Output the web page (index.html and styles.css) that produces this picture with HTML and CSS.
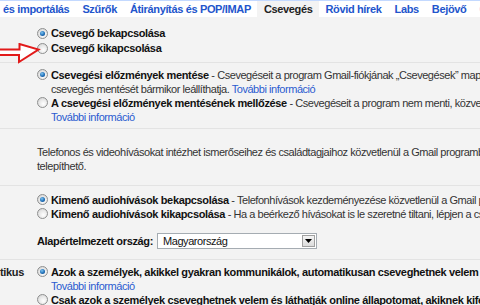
FILE: index.html
```html
<!DOCTYPE html>
<html lang="hu">
<head>
<meta charset="utf-8">
<title>Csevegés beállítások</title>
<link rel="stylesheet" href="styles.css">
</head>
<body>
<div class="page">
  <nav class="tabs">
    <a class="tab">és importálás</a>
    <a class="tab">Szűrők</a>
    <a class="tab">Átirányítás és POP/IMAP</a>
    <span class="tab active">Csevegés</span>
    <a class="tab">Rövid hírek</a>
    <a class="tab">Labs</a>
    <a class="tab">Bejövő</a>
    <a class="tab">Címkék</a>
  </nav>

  <div class="content">
    <section class="row s1">
      <div class="label"></div>
      <div class="body">
        <div class="opt tall"><span class="radio on"></span><div class="txt"><b>Csevegő bekapcsolása</b></div></div>
        <div class="opt tall"><span class="radio"></span><div class="txt"><b>Csevegő kikapcsolása</b></div></div>
      </div>
    </section>

    <section class="row s2">
      <div class="label"></div>
      <div class="body">
        <div class="opt"><span class="radio on"></span><div class="txt"><b>Csevegési előzmények mentése</b> - Csevegéseit a program Gmail-fiókjának „Csevegések” mappájában tárolja.<br>csevegés mentését bármikor leállíthatja. <a class="link">További információ</a></div></div>
        <div class="opt"><span class="radio"></span><div class="txt"><b>A csevegési előzmények mentésének mellőzése</b> - Csevegéseit a program nem menti, közvetlenül<br><a class="link">További információ</a></div></div>
      </div>
    </section>

    <section class="row s3">
      <div class="label"></div>
      <div class="body">
        <p class="para">Telefonos és videohívásokat intézhet ismerőseihez és családtagjaihoz közvetlenül a Gmail programból, a bővítmény<br>telepíthető.</p>
      </div>
    </section>

    <section class="row s4">
      <div class="label"></div>
      <div class="body">
        <div class="opt"><span class="radio on"></span><div class="txt"><b>Kimenő audiohívások bekapcsolása</b> - Telefonhívások kezdeményezése közvetlenül a Gmail programból</div></div>
        <div class="opt"><span class="radio"></span><div class="txt"><b>Kimenő audiohívások kikapcsolása</b> - Ha a beérkező hívásokat is le szeretné tiltani, lépjen a csevegő</div></div>
        <div class="country">
          <b>Alapértelmezett ország:</b>
          <span class="select"><span class="sel-text">Magyarország</span><span class="sel-btn"><svg width="7" height="4" viewBox="0 0 7 4"><path d="M0 0h7L3.5 4z" fill="#000"/></svg></span></span>
        </div>
      </div>
    </section>

    <section class="row s5">
      <div class="label"><b>tikus</b></div>
      <div class="body">
        <div class="opt"><span class="radio on"></span><div class="txt"><b>Azok a személyek, akikkel gyakran kommunikálok, automatikusan cseveghetnek velem</b><br><a class="link">További információ</a></div></div>
        <div class="opt"><span class="radio"></span><div class="txt"><b>Csak azok a személyek cseveghetnek velem és láthatják online állapotomat, akiknek kifejezetten</b></div></div>
      </div>
    </section>
  </div>

  <svg class="arrow" width="42" height="24" viewBox="0 0 42 24">
    <path d="M-3 6.5H19.5V1L38.5 6.5 19 19V12H-3z" fill="#fff" stroke="#e21a1a" stroke-width="2" stroke-linejoin="miter"/>
  </svg>
</div>
</body>
</html>
```

FILE: styles.css
```css
html, body {
  margin: 0;
  padding: 0;
}
body {
  background: #f3f3f3;
  font-family: "Liberation Sans", Arial, sans-serif;
  font-size: 11px;
  letter-spacing: -0.45px;
  color: #333;
  overflow: hidden;
}
b {
  letter-spacing: -0.35px;
}
.page {
  position: relative;
  width: 480px;
  height: 305px;
  overflow: hidden;
}
.tabs {
  display: flex;
  white-space: nowrap;
  background: #fff;
  border-top: 1px solid #c3d9ff;
  height: 16px;
  line-height: 16px;
  padding-left: 0;
}
.tab {
  font-weight: bold;
  letter-spacing: -0.35px;
  color: #2255cc;
  padding: 0 6.5px;
}
.tab:first-child {
  padding-left: 3px;
}
.tab.active {
  background: #f3f3f3;
  color: #222;
}
.content {
  white-space: nowrap;
}
.row {
  display: flex;
  border-top: 1px solid #e3e3e3;
}
.row.s1 {
  border-top: 0;
  padding: 9px 0 6px;
}
.row.s2 { padding: 5px 0 4px; }
.row.s3 { padding: 16px 0 12px; }
.row.s4 { padding: 7px 0 10px; }
.row.s5 { padding: 5px 0 0; }
.label {
  width: 37px;
  flex: none;
  line-height: 14px;
  color: #222;
}
.body {
  flex: 1;
  line-height: 14px;
}
.opt {
  display: flex;
  align-items: flex-start;
}
.opt.tall {
  height: 15px;
  line-height: 15px;
}
.radio {
  flex: none;
  box-sizing: border-box;
  width: 11px;
  height: 11px;
  margin: 1px 3px 0 0;
  border-radius: 50%;
  border: 1px solid #8e8f8f;
  background: radial-gradient(circle at 60% 65%, #ffffff 0, #e6e6e6 55%, #c9c9c9 100%);
  position: relative;
}
.opt.tall .radio {
  margin-top: 2px;
}
.radio.on::after {
  content: "";
  position: absolute;
  left: 2px;
  top: 2px;
  width: 5px;
  height: 5px;
  border-radius: 50%;
  background: radial-gradient(circle at 40% 35%, #7fc4f0 0, #1f6fb8 55%, #0b3f7a 100%);
}
.txt b,
.country b {
  color: #111;
}
.link {
  color: #2a5bd0;
}
.para {
  margin: 0;
}
.country {
  display: flex;
  align-items: center;
  margin-top: 12px;
  height: 16px;
}
.select {
  display: flex;
  align-items: center;
  box-sizing: border-box;
  width: 160px;
  height: 16px;
  margin-left: 4px;
  background: #fff;
  border: 1px solid #a5acb2;
}
.sel-text {
  flex: 1;
  padding-left: 5px;
  color: #111;
}
.sel-btn {
  box-sizing: border-box;
  width: 13px;
  height: 12px;
  margin-right: 1px;
  display: flex;
  align-items: center;
  justify-content: center;
  background: linear-gradient(#f4f4f4, #dcdcdc);
  border: 1px solid #a0a0a0;
}
.arrow {
  position: absolute;
  left: 0;
  top: 43px;
}
```
